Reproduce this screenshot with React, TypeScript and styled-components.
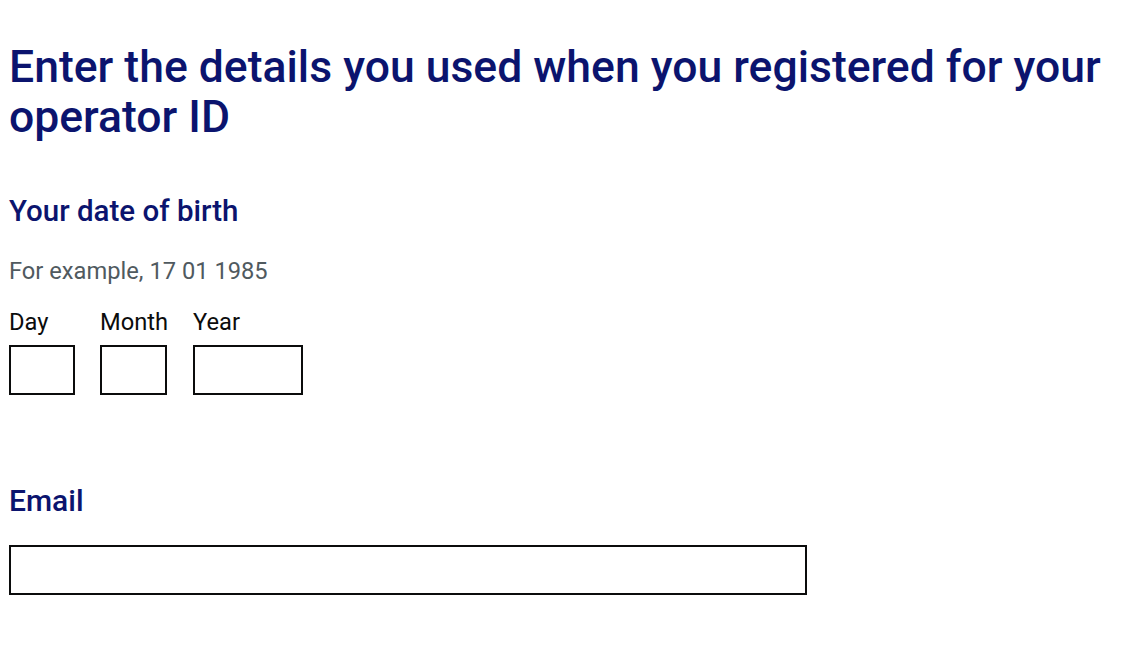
import React from "react";
import styled, { createGlobalStyle } from "styled-components";

const Global = createGlobalStyle`
  html, body { margin: 0; padding: 0; background: #ffffff; }
  body { font-family: Roboto, "Noto Sans", Arial, sans-serif; color: #0b0c0c; }
`;

const Page = styled.main`
  padding: 42px 9px 40px 9px;
`;

const Title = styled.h1`
  margin: 0;
  font-size: 44.5px;
  line-height: 50px;
  font-weight: 500;
  color: #0b146e;
  max-width: 1120px;
`;

const Fieldset = styled.fieldset`
  margin: 52px 0 0 0;
  padding: 0;
  border: 0;
  min-width: 0;
`;

const Legend = styled.legend`
  padding: 0;
  font-size: 29.5px;
  line-height: 34px;
  font-weight: 500;
  color: #0b146e;
`;

const Hint = styled.div`
  margin-top: 29px;
  font-size: 23.7px;
  line-height: 28px;
  color: #505a5f;
`;

const DateRow = styled.div`
  display: flex;
  gap: 25px;
  margin-top: 23px;
`;

const DateItem = styled.div`
  display: flex;
  flex-direction: column;
`;

const SmallLabel = styled.label`
  font-size: 23.7px;
  line-height: 28px;
  color: #0b0c0c;
  margin-bottom: 9px;
`;

const Input = styled.input<{ $w: number }>`
  box-sizing: border-box;
  width: ${(p) => p.$w}px;
  height: 50px;
  border: 2px solid #0b0c0c;
  border-radius: 0;
  padding: 5px;
  font: inherit;
  font-size: 19px;
  background: #fff;
  outline: none;
`;

const EmailGroup = styled.div`
  margin-top: 89px;
  display: flex;
  flex-direction: column;
`;

const EmailLabel = styled.label`
  font-size: 30px;
  line-height: 34px;
  font-weight: 500;
  color: #0b146e;
  margin-bottom: 27px;
`;

export default function App() {
  return (
    <>
      <Global />
      <Page>
        <Title>Enter the details you used when you registered for your operator ID</Title>
        <Fieldset>
          <Legend>Your date of birth</Legend>
          <Hint>For example, 17 01 1985</Hint>
          <DateRow>
            <DateItem>
              <SmallLabel htmlFor="day">Day</SmallLabel>
              <Input id="day" $w={66} />
            </DateItem>
            <DateItem>
              <SmallLabel htmlFor="month">Month</SmallLabel>
              <Input id="month" $w={67} />
            </DateItem>
            <DateItem>
              <SmallLabel htmlFor="year">Year</SmallLabel>
              <Input id="year" $w={110} />
            </DateItem>
          </DateRow>
        </Fieldset>
        <EmailGroup>
          <EmailLabel htmlFor="email">Email</EmailLabel>
          <Input id="email" type="email" $w={798} />
        </EmailGroup>
      </Page>
    </>
  );
}
